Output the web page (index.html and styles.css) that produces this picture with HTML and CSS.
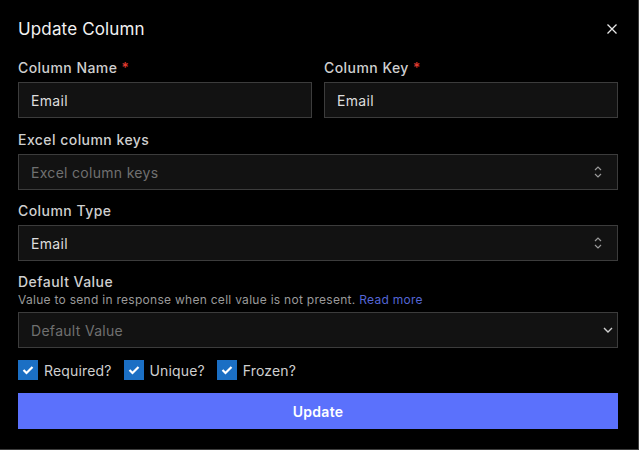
FILE: index.html
```html
<!DOCTYPE html>
<html lang="en">
<head>
<meta charset="utf-8">
<title>Update Column</title>
<link rel="stylesheet" href="styles.css">
</head>
<body>
<div class="dialog">
  <header class="dialog-header">
    <h1 class="dialog-title">Update Column</h1>
    <button class="close-btn" aria-label="Close">
      <svg width="10" height="10" viewBox="0 0 10 10"><path d="M0.5 0.5 L9.5 9.5 M9.5 0.5 L0.5 9.5" stroke="#e8e8e8" stroke-width="1.3" fill="none"/></svg>
    </button>
  </header>
  <form class="form">
    <div class="row-2">
      <div class="field">
        <label class="label">Column Name <span class="req">*</span></label>
        <div class="control"><span class="value">Email</span></div>
      </div>
      <div class="field">
        <label class="label">Column Key <span class="req">*</span></label>
        <div class="control"><span class="value">Email</span></div>
      </div>
    </div>
    <div class="field">
      <label class="label">Excel column keys</label>
      <div class="control select">
        <span class="placeholder">Excel column keys</span>
        <svg class="updown" width="8" height="12" viewBox="0 0 8 12"><path d="M1 4 L4 1 L7 4 M1 8 L4 11 L7 8" stroke="#9a9a9a" stroke-width="1.2" fill="none"/></svg>
      </div>
    </div>
    <div class="field">
      <label class="label">Column Type</label>
      <div class="control select">
        <span class="value">Email</span>
        <svg class="updown" width="8" height="12" viewBox="0 0 8 12"><path d="M1 4 L4 1 L7 4 M1 8 L4 11 L7 8" stroke="#9a9a9a" stroke-width="1.2" fill="none"/></svg>
      </div>
    </div>
    <div class="field">
      <div class="label-group">
        <label class="label">Default Value</label>
        <p class="help">Value to send in response when cell value is not present. <a class="link">Read more</a></p>
      </div>
      <div class="control select">
        <span class="placeholder">Default Value</span>
        <svg class="down" width="10" height="6" viewBox="0 0 10 6"><path d="M1 1 L5 5 L9 1" stroke="#d0d0d0" stroke-width="1.4" fill="none"/></svg>
      </div>
    </div>
    <div class="checks">
      <label class="check"><span class="box"><svg width="12" height="10" viewBox="0 0 12 10"><path d="M1.5 5 L4.5 8 L10.5 2" stroke="#fff" stroke-width="2.2" fill="none"/></svg></span>Required?</label>
      <label class="check"><span class="box"><svg width="12" height="10" viewBox="0 0 12 10"><path d="M1.5 5 L4.5 8 L10.5 2" stroke="#fff" stroke-width="2.2" fill="none"/></svg></span>Unique?</label>
      <label class="check"><span class="box"><svg width="12" height="10" viewBox="0 0 12 10"><path d="M1.5 5 L4.5 8 L10.5 2" stroke="#fff" stroke-width="2.2" fill="none"/></svg></span>Frozen?</label>
    </div>
    <button type="button" class="submit">Update</button>
  </form>
</div>
</body>
</html>
```
FILE: styles.css
```css
* { box-sizing: border-box; }
html, body { margin: 0; padding: 0; background: #000; }
body { font-family: "Inter", "Open Sans", sans-serif; color: #d6d6d6; }
.dialog {
  width: 639px;
  height: 450px;
  background: #000;
  border-right: 1px solid #3d3d3d;
  border-bottom: 1px solid #3d3d3d;
  padding: 0 20px 0 18px;
}
.dialog-header {
  display: flex;
  align-items: center;
  justify-content: space-between;
  height: 57px;
}
.dialog-title {
  margin: 0;
  font-size: 17px;
  font-weight: 400;
  letter-spacing: 0.15px;
  color: #f2f2f2;
}
.close-btn {
  background: none;
  border: 0;
  padding: 0;
  margin-right: 1px;
  display: flex;
}
.form { display: flex; flex-direction: column; gap: 10px; }
.row-2 { display: grid; grid-template-columns: 1fr 1fr; gap: 12px; margin-bottom: 1px; }
.field { display: flex; flex-direction: column; gap: 4px; }
.label { font-size: 14px; line-height: 21px; font-weight: 500; letter-spacing: 0.45px; color: #cfcfcf; }
.req { color: #e03a2f; }
.label-group { display: flex; flex-direction: column; }
.help { margin: 0; font-size: 12px; line-height: 16px; letter-spacing: 0.28px; color: #9a9a9a; }
.link { color: #5466d6; }
.control {
  height: 36px;
  background: #121212;
  border: 1px solid #3c3c3c;
  display: flex;
  align-items: center;
  padding: 0 12px;
  font-size: 14px;
  letter-spacing: 0.3px;
}
.value { color: #dedede; }
.placeholder { color: #707070; }
.select { justify-content: space-between; }
.updown { margin-right: 3px; }
.down { margin-right: -8px; }
.checks { display: flex; gap: 12px; margin-top: 2px; }
.check { display: flex; align-items: center; gap: 6px; font-size: 14px; letter-spacing: 0.15px; color: #cfcfcf; }
.box {
  width: 20px; height: 20px;
  background: #1b6fc4;
  display: flex; align-items: center; justify-content: center;
}
.submit {
  height: 36px;
  border: 0;
  background: #5b71fc;
  color: #fff;
  font-family: inherit;
  font-size: 14px;
  font-weight: 600;
  letter-spacing: 0.3px;
  margin-top: 3px;
}
```
